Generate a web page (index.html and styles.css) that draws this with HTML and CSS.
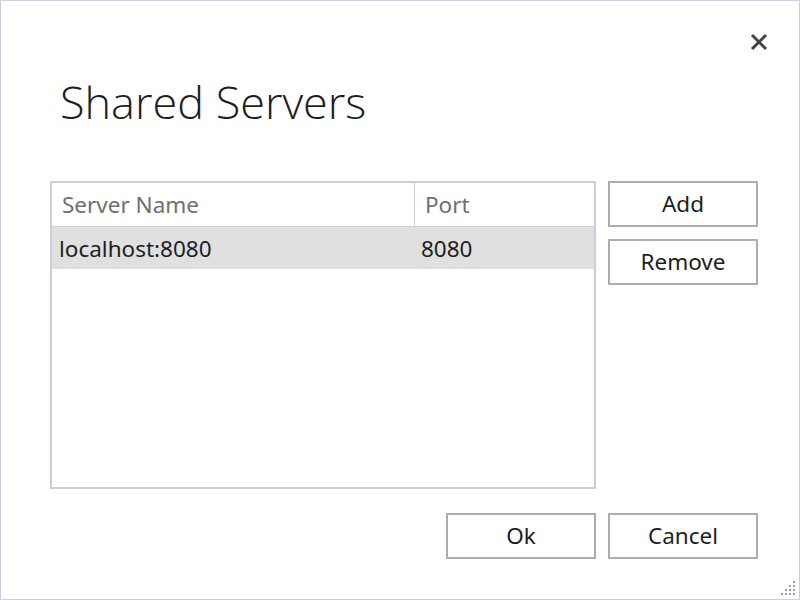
FILE: index.html
```html
<!DOCTYPE html>
<html>
<head>
<meta charset="utf-8">
<link rel="stylesheet" href="styles.css">
</head>
<body>
<div class="window">
  <div class="titlebar">
    <button class="close" aria-label="Close">
      <svg width="18" height="18" viewBox="0 0 18 18"><path d="M2 2 L16 16 M16 2 L2 16" stroke="#444" stroke-width="3" fill="none"/></svg>
    </button>
  </div>
  <h1 class="title">Shared Servers</h1>
  <div class="main">
    <div class="list">
      <div class="row head">
        <div class="cell name">Server Name</div>
        <div class="cell port">Port</div>
      </div>
      <div class="row sel">
        <div class="cell name">localhost:8080</div>
        <div class="cell port">8080</div>
      </div>
    </div>
    <div class="side">
      <button class="btn">Add</button>
      <button class="btn">Remove</button>
    </div>
  </div>
  <div class="footer">
    <button class="btn">Ok</button>
    <button class="btn">Cancel</button>
  </div>
  <svg class="grip" width="20" height="20" viewBox="0 0 20 20">
    <g fill="#9a9cb6">
      <rect x="16" y="4" width="2" height="2"/>
      <rect x="12" y="8" width="2" height="2"/><rect x="16" y="8" width="2" height="2"/>
      <rect x="8" y="12" width="2" height="2"/><rect x="12" y="12" width="2" height="2"/><rect x="16" y="12" width="2" height="2"/>
      <rect x="4" y="16" width="2" height="2"/><rect x="8" y="16" width="2" height="2"/><rect x="12" y="16" width="2" height="2"/><rect x="16" y="16" width="2" height="2"/>
    </g>
  </svg>
</div>
</body>
</html>
```
FILE: styles.css
```css
* { box-sizing: border-box; }
html, body { margin: 0; padding: 0; background: #fff; }
body { font-family: "Noto Sans", "Open Sans", "Liberation Sans", sans-serif; color: #1e1e1e; }
.window {
  position: relative;
  width: 800px;
  height: 600px;
  border: 1px solid #cdcfdc;
  background: #fff;
}
.titlebar { display: flex; justify-content: flex-end; padding: 32px 31px 0 0; height: 52px; }
.close { border: 0; background: none; padding: 0; width: 18px; height: 18px; display: block; }
.close svg { display: block; }
.title {
  margin: 20px 0 0 59px;
  font-family: "Open Sans", "Noto Sans", sans-serif;
  font-weight: 300;
  font-size: 45px;
  line-height: 58px;
  color: #1e1e1e;
}
.main { display: flex; gap: 12px; margin: 50px 0 0 49px; }
.list {
  width: 546px;
  height: 308px;
  border: 2px solid #cccedb;
}
.row { display: flex; height: 42px; align-items: center; font-size: 22.5px; }
.row.head { height: 44px; border-bottom: 1px solid #cccedb; color: #707070; }
.row.head .cell.name { border-right: 1px solid #cccedb; padding-left: 10px; }
.row.head .cell.port { padding-left: 10px; }
.row.sel { background: #e0e0e0; color: #1e1e1e; height: 42px; }
.cell { height: 100%; display: flex; align-items: center; }
.cell.name { width: 363px; padding-left: 7px; }
.cell.port { flex: 1; padding-left: 6px; }
.side { display: flex; flex-direction: column; gap: 12px; }
.btn {
  width: 150px;
  height: 46px;
  border: 2px solid #adadad;
  background: #fff;
  font-family: "Noto Sans", "Open Sans", sans-serif;
  font-size: 22.5px;
  color: #1e1e1e;
  padding: 0 0 2px 0;
}
.footer { display: flex; justify-content: flex-end; gap: 12px; margin: 24px 41px 0 0; }
.grip { position: absolute; right: 2px; bottom: 2px; }
```
